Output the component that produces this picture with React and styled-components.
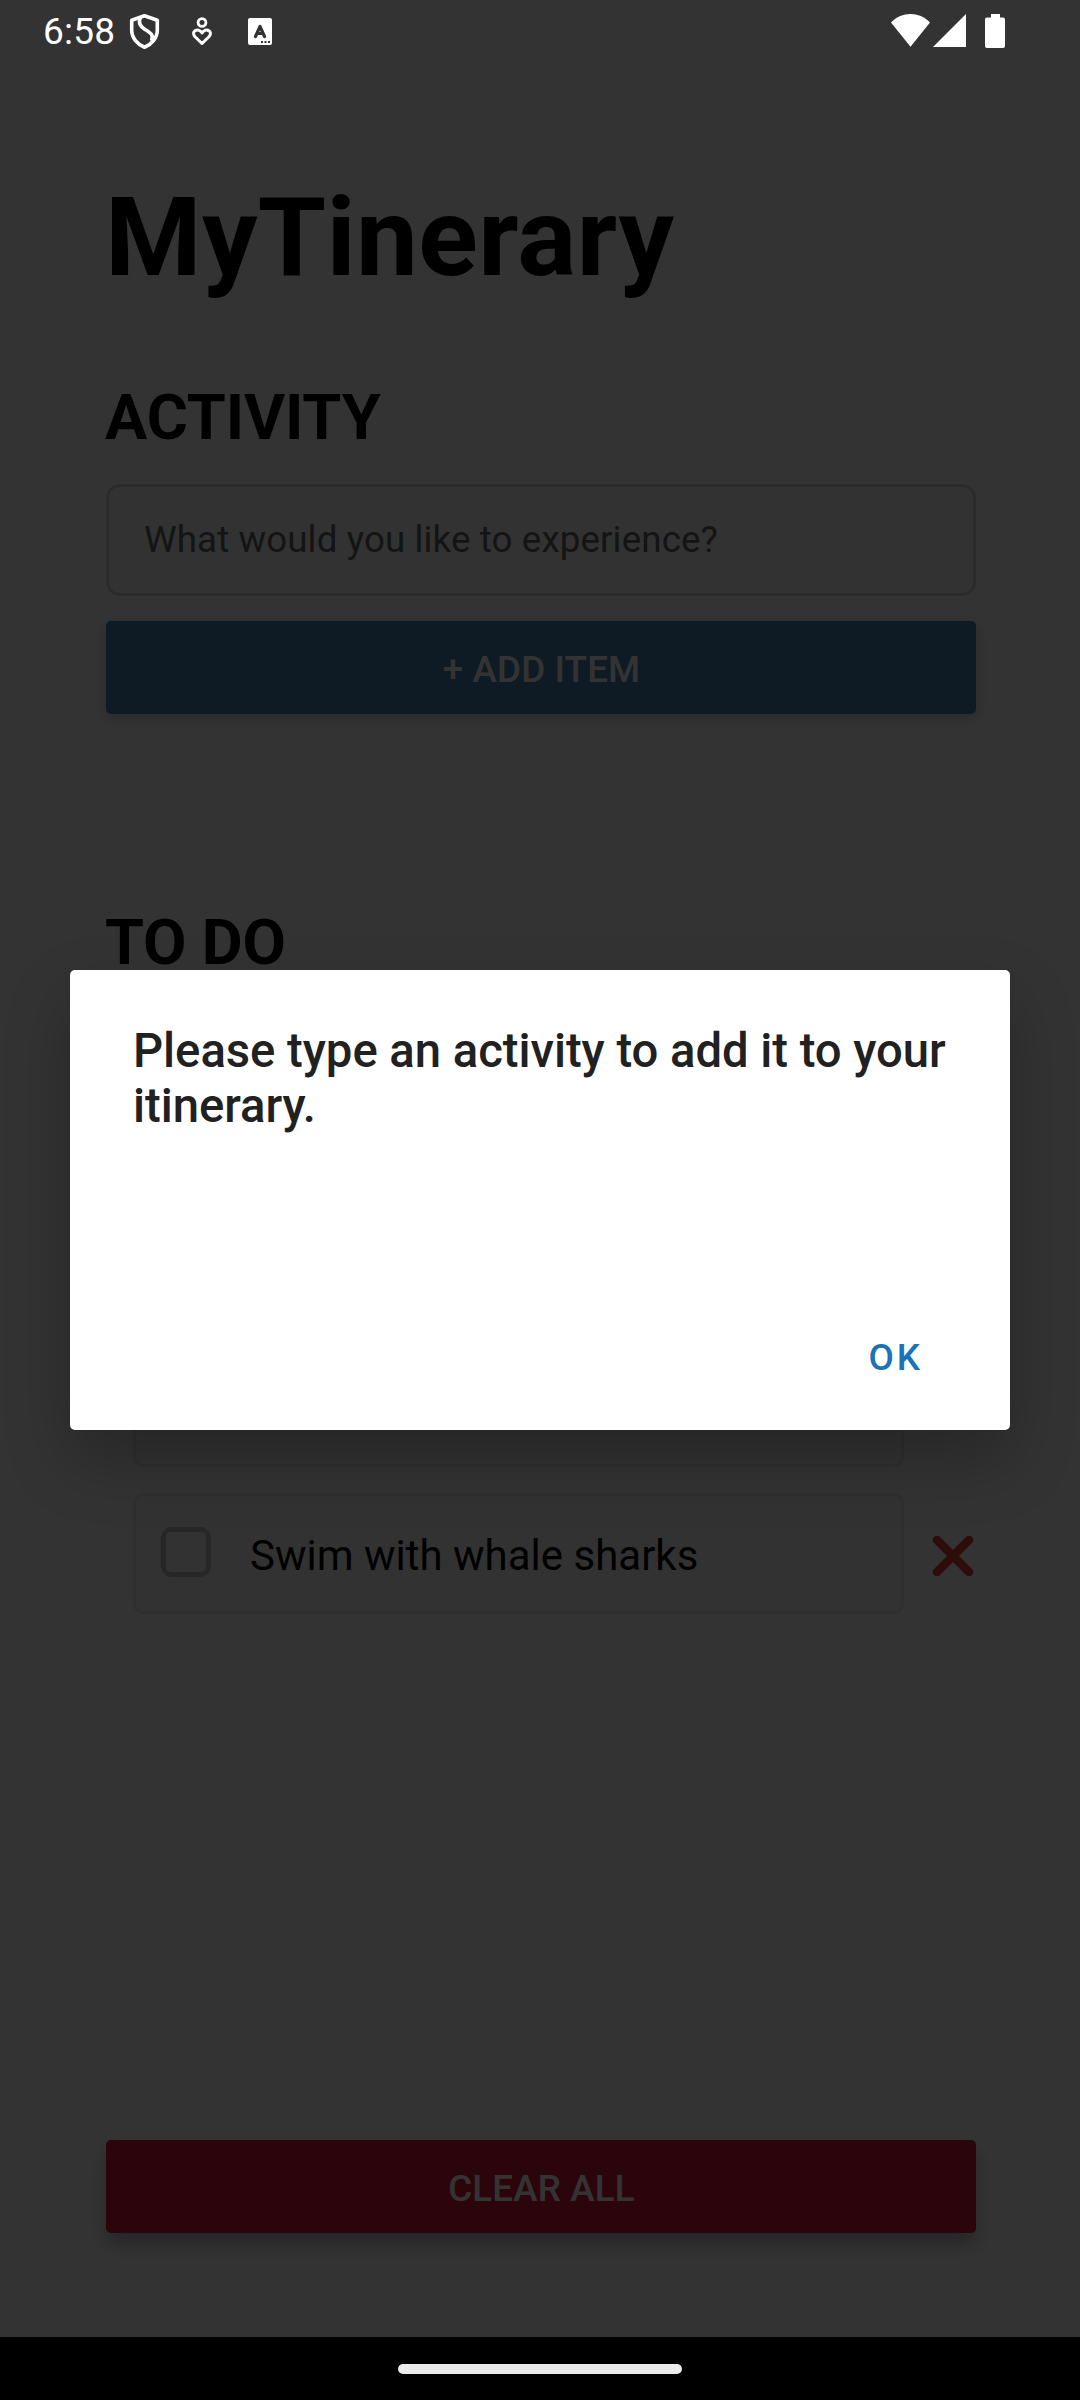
import React from "react";
import styled, { createGlobalStyle } from "styled-components";

const GlobalStyle = createGlobalStyle`
  * { box-sizing: border-box; }
  body { margin: 0; background: #fff; }
`;

const Screen = styled.div`
  position: relative;
  width: 1080px;
  height: 2400px;
  overflow: hidden;
  display: flex;
  flex-direction: column;
  font-family: Roboto, "Liberation Sans", sans-serif;
  color: #000;
  background: #fff;
`;

const Content = styled.main`
  flex: 1;
  display: flex;
  flex-direction: column;
  padding: 173px 104px 167px 106px;
`;

const Title = styled.h1`
  margin: 0 0 78px -1px;
  font-size: 110.25px;
  font-weight: 700;
  line-height: 130px;
  letter-spacing: 0.4px;
`;

const SectionTitle = styled.h2`
  margin: 0 0 0 -1px;
  font-size: 63px;
  font-weight: 700;
  line-height: 74px;
  letter-spacing: -0.15px;
`;

const ActivityInput = styled.input`
  width: 100%;
  height: 112px;
  margin: 29px 0 25px;
  padding: 0 35px 2px;
  border: 3px solid #d8d8d8;
  border-radius: 14px;
  background: #fafafa;
  font-family: inherit;
  font-size: 36.75px;
  letter-spacing: 0.1px;
  outline: none;
  &::placeholder { color: #666; opacity: 1; }
`;

const Button = styled.button`
  flex: none;
  width: 100%;
  height: 93px;
  padding: 3px 0 0 1px;
  border: 0;
  border-radius: 5px;
  background: ${(p) => p.$color};
  box-shadow: ${(p) => p.$shadow};
  color: #fff;
  font-family: inherit;
  font-size: 36.75px;
  font-weight: 500;
  letter-spacing: 0.15px;
`;

const TodoSection = styled.section`
  flex: 1;
  display: flex;
  flex-direction: column;
  padding-top: 192px;
`;

const TodoList = styled.ul`
  list-style: none;
  margin: 0;
  padding: 366px 0 0 27px;
  display: flex;
  flex-direction: column;
  gap: 26px;
`;

const TodoRow = styled.li`
  display: flex;
  align-items: center;
  gap: 28px;
`;

const TodoCard = styled.div`
  width: 771px;
  height: 121px;
  padding-left: 25px;
  display: flex;
  align-items: center;
  gap: 39px;
  border: 3px solid #e8e8e8;
  border-radius: 10px;
  background: #fafafa;
  font-size: 42px;
`;

const TodoName = styled.span`
  padding-top: 4px;
`;

const Checkbox = styled.span`
  width: 50px;
  height: 50px;
  margin-bottom: 4px;
  border: 5px solid #c3c3c3;
  border-radius: 10px;
`;

const Scrim = styled.div`
  position: absolute;
  inset: 0;
  background: rgba(0, 0, 0, 0.8);
  display: flex;
  align-items: center;
  justify-content: center;
`;

const Dialog = styled.div`
  width: 940px;
  height: 460px;
  padding: 54px 50px 0 63px;
  display: flex;
  flex-direction: column;
  justify-content: space-between;
  border-radius: 5px;
  background: #fff;
  box-shadow: 0 30px 66px rgba(0, 0, 0, 0.24);
`;

const Message = styled.p`
  margin: 0;
  color: #212121;
  font-size: 47.25px;
  font-weight: 500;
  line-height: 55px;
  letter-spacing: -0.04px;
`;

const ConfirmButton = styled.button`
  align-self: flex-end;
  height: 126px;
  margin: 0 37px 10px 0;
  padding: 0;
  border: 0;
  background: none;
  color: #1a73b8;
  font-family: inherit;
  font-size: 36.75px;
  font-weight: 500;
  letter-spacing: 3px;
`;

const StatusBar = styled.header`
  position: absolute;
  top: 0;
  left: 0;
  width: 100%;
  height: 62px;
  padding: 0 75px 0 43px;
  display: flex;
  justify-content: space-between;
  align-items: center;
  color: #fff;
  font-size: 37px;
`;

const StatusGroup = styled.div`
  display: flex;
  align-items: center;
`;

const Time = styled.span`
  width: 86px;
  letter-spacing: 0.2px;
`;

const NavBar = styled.nav`
  position: absolute;
  bottom: 0;
  width: 100%;
  height: 63px;
  padding-top: 27px;
  display: flex;
  justify-content: center;
  background: #000;
`;

const Handle = styled.span`
  width: 284px;
  height: 10px;
  border-radius: 5px;
  background: #ebebeb;
`;

const DeleteSvg = styled.svg`
  margin-top: 4px;
`;

const DeleteIcon = () => (
  <DeleteSvg width="42" height="42" viewBox="0 0 42 42" fill="none" strokeLinecap="round">
    <path d="M5 5L37 37M37 5L5 37" stroke="#e03c30" strokeWidth="8.600" />
    <path d="M5.500 5.500L36.500 36.500" stroke="#f05545" strokeWidth="1" />
  </DeleteSvg>
);

const StatusIcons = () => (
  <svg width="160" height="62" viewBox="129 0 160 62" fill="none" stroke="#fff">
    <path d="M144.500 15.700L157.300 20.200V30C157.300 38 151.500 44.500 144.500 47.200C137.500 44.500 131.700 38 131.700 30V20.200Z" strokeWidth="3.600" strokeLinejoin="round" />
    <path d="M140.500 17C138 23 140 26 145 29.500C151 33 154 35 151.500 41" strokeWidth="3.600" />
    <circle cx="202" cy="22.500" r="3.900" strokeWidth="2.800" />
    <path d="M202 43.500L194.800 36.500C190.500 31.500 198 27 202 33C206 27 213.500 31.500 209.200 36.500Z" strokeWidth="3" strokeLinejoin="round" />
    <rect x="248" y="18" width="24" height="27" rx="2" fill="#fff" stroke="none" />
    <path d="M255.500 36.500L260 26.500L264.500 36.500M257.500 33.500H262.500" stroke="#333" strokeWidth="3.200" strokeLinejoin="round" strokeLinecap="round" />
    <path d="M261 42H263M264.500 42H266.500M268 42H270" stroke="#333" strokeWidth="2" />
  </svg>
);

const SystemIcons = () => (
  <svg width="114" height="62" viewBox="891 0 114 62" fill="#fff">
    <path d="M891 22.500C902 11.200 919 11.200 930 22.500L910.500 46.800Z" />
    <path d="M933 47L966 14V47Z" />
    <path d="M991 14H1000V17.500H1003Q1005 17.500 1005 19.500V46Q1005 48 1003 48H987Q985 48 985 46V19.500Q985 17.500 987 17.500H991Z" />
  </svg>
);

const todos = [{ id: 1 }, { id: 2, name: "Swim with whale sharks" }];

export default function App() {
  return (
    <Screen>
      <GlobalStyle />
      <Content>
        <Title>MyTinerary</Title>
        <SectionTitle>ACTIVITY</SectionTitle>
        <ActivityInput placeholder="What would you like to experience?" />
        <Button $color="#4682b4" $shadow="0 4px 14px rgba(0,0,0,0.22)">+ ADD ITEM</Button>
        <TodoSection>
          <SectionTitle>TO DO</SectionTitle>
          <TodoList>
            {todos.map(({ id, name }) => (
              <TodoRow key={id}>
                <TodoCard>
                  <Checkbox />
                  <TodoName>{name}</TodoName>
                </TodoCard>
                <DeleteIcon />
              </TodoRow>
            ))}
          </TodoList>
        </TodoSection>
        <Button $color="#dc143c" $shadow="0 12px 18px rgba(0,0,0,0.26)">CLEAR ALL</Button>
      </Content>
      <Scrim>
        <Dialog role="dialog">
          <Message>Please type an activity to add it to your itinerary.</Message>
          <ConfirmButton>OK</ConfirmButton>
        </Dialog>
      </Scrim>
      <StatusBar>
        <StatusGroup>
          <Time>6:58</Time>
          <StatusIcons />
        </StatusGroup>
        <SystemIcons />
      </StatusBar>
      <NavBar>
        <Handle />
      </NavBar>
    </Screen>
  );
}
